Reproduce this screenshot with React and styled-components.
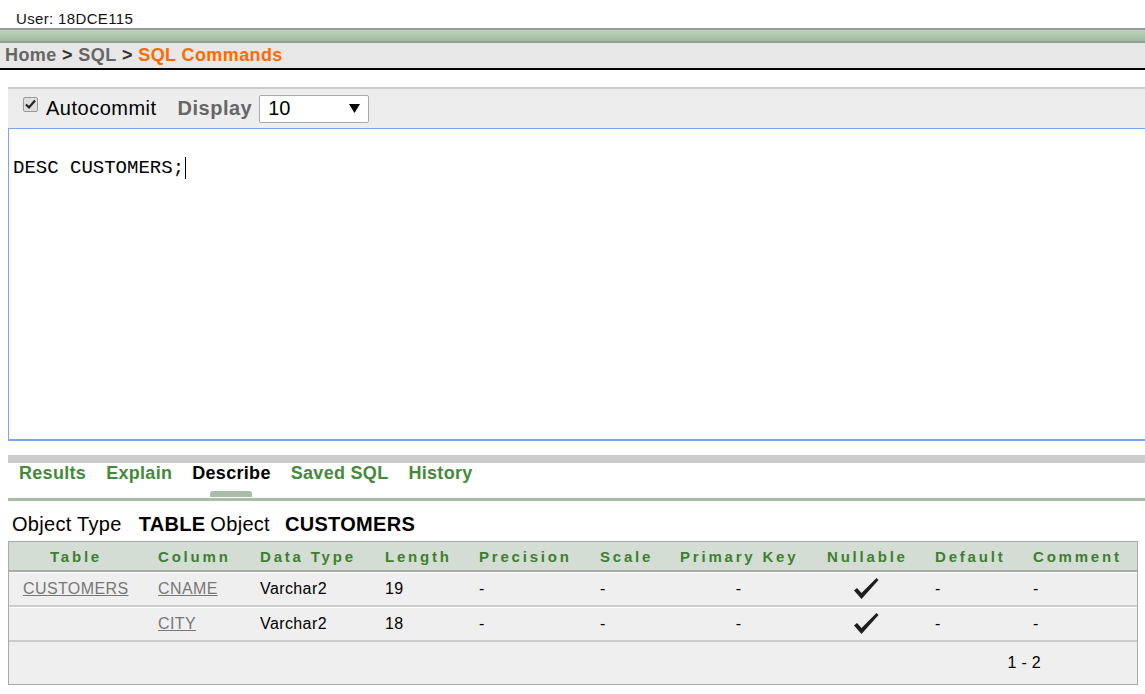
import React from 'react';
import styled, { createGlobalStyle } from 'styled-components';

const GlobalStyle = createGlobalStyle`
  html, body {
    margin: 0;
    padding: 0;
    background: #fff;
    overflow: hidden;
    font-family: "Liberation Sans", Arial, sans-serif;
  }
`;

const Page = styled.div`
  width: 1145px;
  height: 694px;
  overflow: hidden;
`;

const UserBar = styled.div`
  height: 28px;
  box-sizing: border-box;
  padding: 10px 0 0 16px;
  font-size: 15px;
  line-height: 17px;
  letter-spacing: 0.35px;
  color: #111;
`;

const GreenBar = styled.div`
  height: 11px;
  border-top: 2px solid #999;
  border-bottom: 2px solid #999;
  background: linear-gradient(#bcd3bc, #9fbb9f);
`;

const Breadcrumb = styled.div`
  height: 25px;
  background: #e6e7e6;
  border-bottom: 2px solid #000;
  padding-left: 5px;
  display: flex;
  align-items: center;
  font-size: 18px;
  font-weight: bold;
  letter-spacing: 0.4px;
  color: #666;
  white-space: pre;
`;

const Crumb = styled.span`
  color: ${(p) => (p.current ? '#ff6a00' : '#666')};
`;

const Sep = styled.span`
  color: #333;
`;

const Main = styled.div`
  margin-left: 8px;
  width: 1160px;
`;

const Toolbar = styled.div`
  margin-top: 17px;
  height: 39px;
  border-top: 2px solid #ccc;
  background: #ededed;
  display: flex;
  align-items: center;
  padding-left: 15px;
  font-size: 20px;
`;

const Check = styled.span`
  width: 13px;
  height: 13px;
  border: 1px solid #9a9a9a;
  border-radius: 2px;
  background: #dedede;
  display: flex;
  align-items: center;
  justify-content: center;
  margin-top: -9px;
  margin-right: 8px;
`;

const Label = styled.span`
  color: ${(p) => (p.strong ? '#666' : '#000')};
  font-weight: ${(p) => (p.strong ? 'bold' : 'normal')};
  letter-spacing: 0.5px;
  margin-right: ${(p) => p.gap || 0}px;
`;

const Select = styled.div`
  width: 92px;
  height: 26px;
  border: 1px solid #a9a9a9;
  border-radius: 2px;
  background: #fff;
  display: flex;
  align-items: center;
  justify-content: space-between;
  padding: 0 8px;
`;

const Editor = styled.div`
  height: 313px;
  border: 1px solid #7aa5ee;
  border-bottom-width: 2px;
  border-right: none;
  background: #fff;
  padding: 28px 0 0 4px;
  box-sizing: border-box;
  font-family: "Liberation Mono", monospace;
  font-size: 19px;
  line-height: 22px;
  color: #000;
  display: flex;
  align-items: flex-start;
`;

const Caret = styled.span`
  width: 1px;
  height: 22px;
  background: #000;
  margin-left: 1px;
`;

const TabStrip = styled.div`
  margin-top: 14px;
  border-top: 8px solid #ccc;
  border-bottom: 3px solid #a9bea9;
  height: 35px;
  display: flex;
  gap: 20px;
  padding-left: 11px;
`;

const Tab = styled.div`
  display: flex;
  flex-direction: column;
  align-items: center;
  font-size: 18px;
  font-weight: bold;
  letter-spacing: 0.3px;
  color: ${(p) => (p.active ? '#000' : '#458a3b')};
  padding-top: 1px;
  line-height: 19px;
`;

const TabMark = styled.div`
  width: 42px;
  height: 6px;
  margin-top: 8px;
  border-radius: 3px 3px 0 0;
  background: ${(p) => (p.active ? '#a9bea9' : 'transparent')};
`;

const ObjectLine = styled.div`
  height: 40px;
  box-sizing: border-box;
  padding: 6px 0 0 4px;
  display: flex;
  align-items: center;
  font-size: 20px;
  letter-spacing: 0.3px;
  color: #000;
  white-space: pre;
`;

const Strong = styled.b`
  margin: 0 ${(p) => p.right || 0}px 0 ${(p) => p.left || 0}px;
`;

const Table = styled.div`
  width: 1128px;
  border: 1px solid #aaa;
`;

const cols = '134px 102px 125px 94px 121px 80px 147px 108px 98px 119px';

const HeadRow = styled.div`
  display: grid;
  grid-template-columns: ${cols};
  height: 28px;
  background: #d3ddd3;
  border-bottom: 2px solid #aaa;
`;

const HeadCell = styled.div`
  display: flex;
  align-items: center;
  justify-content: ${(p) => (p.center ? 'center' : 'flex-start')};
  padding-left: ${(p) => (p.center ? 0 : 15)}px;
  font-size: 15px;
  font-weight: bold;
  letter-spacing: 2.8px;
  color: #3f7f31;
  white-space: nowrap;
`;

const Row = styled.div`
  display: grid;
  grid-template-columns: ${cols};
  height: 32px;
  background: #efefef;
  border-top: 1px solid #fff;
  border-bottom: 2px solid #ccc;
`;

const Cell = styled.div`
  display: flex;
  align-items: center;
  justify-content: ${(p) => (p.center ? 'center' : 'flex-start')};
  padding-left: ${(p) => (p.center ? 0 : p.first ? 14 : 15)}px;
  font-size: 16px;
  letter-spacing: 0.4px;
  color: #000;
  white-space: nowrap;
`;

const Link = styled.a`
  color: #777;
  text-decoration: underline;
`;

const Footer = styled.div`
  height: 42px;
  background: #efefef;
  display: flex;
  align-items: center;
  justify-content: flex-end;
  padding-right: 96px;
  font-size: 16px;
  letter-spacing: 0.3px;
  color: #000;
`;

const headers = [
  'Table',
  'Column',
  'Data Type',
  'Length',
  'Precision',
  'Scale',
  'Primary Key',
  'Nullable',
  'Default',
  'Comment',
];

const rows = [
  { table: 'CUSTOMERS', column: 'CNAME', type: 'Varchar2', length: '19' },
  { table: '', column: 'CITY', type: 'Varchar2', length: '18' },
];

const Tick = () => (
  <svg width="28" height="24" viewBox="0 0 28 24">
    <path
      d="M2 13.5 L5 11 L9.5 16 L24.5 1 L26.5 3 L9.5 22 Z"
      fill="#1e1e1e"
    />
  </svg>
);

const SmallCheck = () => (
  <svg width="11" height="11" viewBox="0 0 11 11">
    <path d="M1 5.5 L4 8.5 L10 1.5" stroke="#222" strokeWidth="2.2" fill="none" />
  </svg>
);

const Arrow = () => (
  <svg width="11" height="9" viewBox="0 0 11 9">
    <polygon points="0,0 11,0 5.5,9" fill="#000" />
  </svg>
);

export default function App() {
  return (
    <Page>
      <GlobalStyle />
      <UserBar>User: 18DCE115</UserBar>
      <GreenBar />
      <Breadcrumb>
        <Crumb>Home</Crumb>
        <Sep> &gt; </Sep>
        <Crumb>SQL</Crumb>
        <Sep> &gt; </Sep>
        <Crumb current>SQL Commands</Crumb>
      </Breadcrumb>

      <Main>
        <Toolbar>
          <Check>
            <SmallCheck />
          </Check>
          <Label gap={21}>Autocommit</Label>
          <Label strong gap={7}>
            Display
          </Label>
          <Select>
            <span>10</span>
            <Arrow />
          </Select>
        </Toolbar>

        <Editor>
          DESC CUSTOMERS;
          <Caret />
        </Editor>

        <TabStrip>
          {['Results', 'Explain', 'Describe', 'Saved SQL', 'History'].map((t) => (
            <Tab key={t} active={t === 'Describe'}>
              {t}
              <TabMark active={t === 'Describe'} />
            </Tab>
          ))}
        </TabStrip>

        <ObjectLine>
          Object Type
          <Strong left={17} right={5}>
            TABLE
          </Strong>
          Object
          <Strong left={15}>CUSTOMERS</Strong>
        </ObjectLine>

        <Table>
          <HeadRow>
            {headers.map((h, i) => (
              <HeadCell key={h} center={i === 0}>
                {h}
              </HeadCell>
            ))}
          </HeadRow>
          {rows.map((r) => (
            <Row key={r.column}>
              <Cell first>{r.table && <Link>{r.table}</Link>}</Cell>
              <Cell>
                <Link>{r.column}</Link>
              </Cell>
              <Cell>{r.type}</Cell>
              <Cell>{r.length}</Cell>
              <Cell>-</Cell>
              <Cell>-</Cell>
              <Cell center>-</Cell>
              <Cell center>
                <Tick />
              </Cell>
              <Cell>-</Cell>
              <Cell>-</Cell>
            </Row>
          ))}
          <Footer>1 - 2</Footer>
        </Table>
      </Main>
    </Page>
  );
}
